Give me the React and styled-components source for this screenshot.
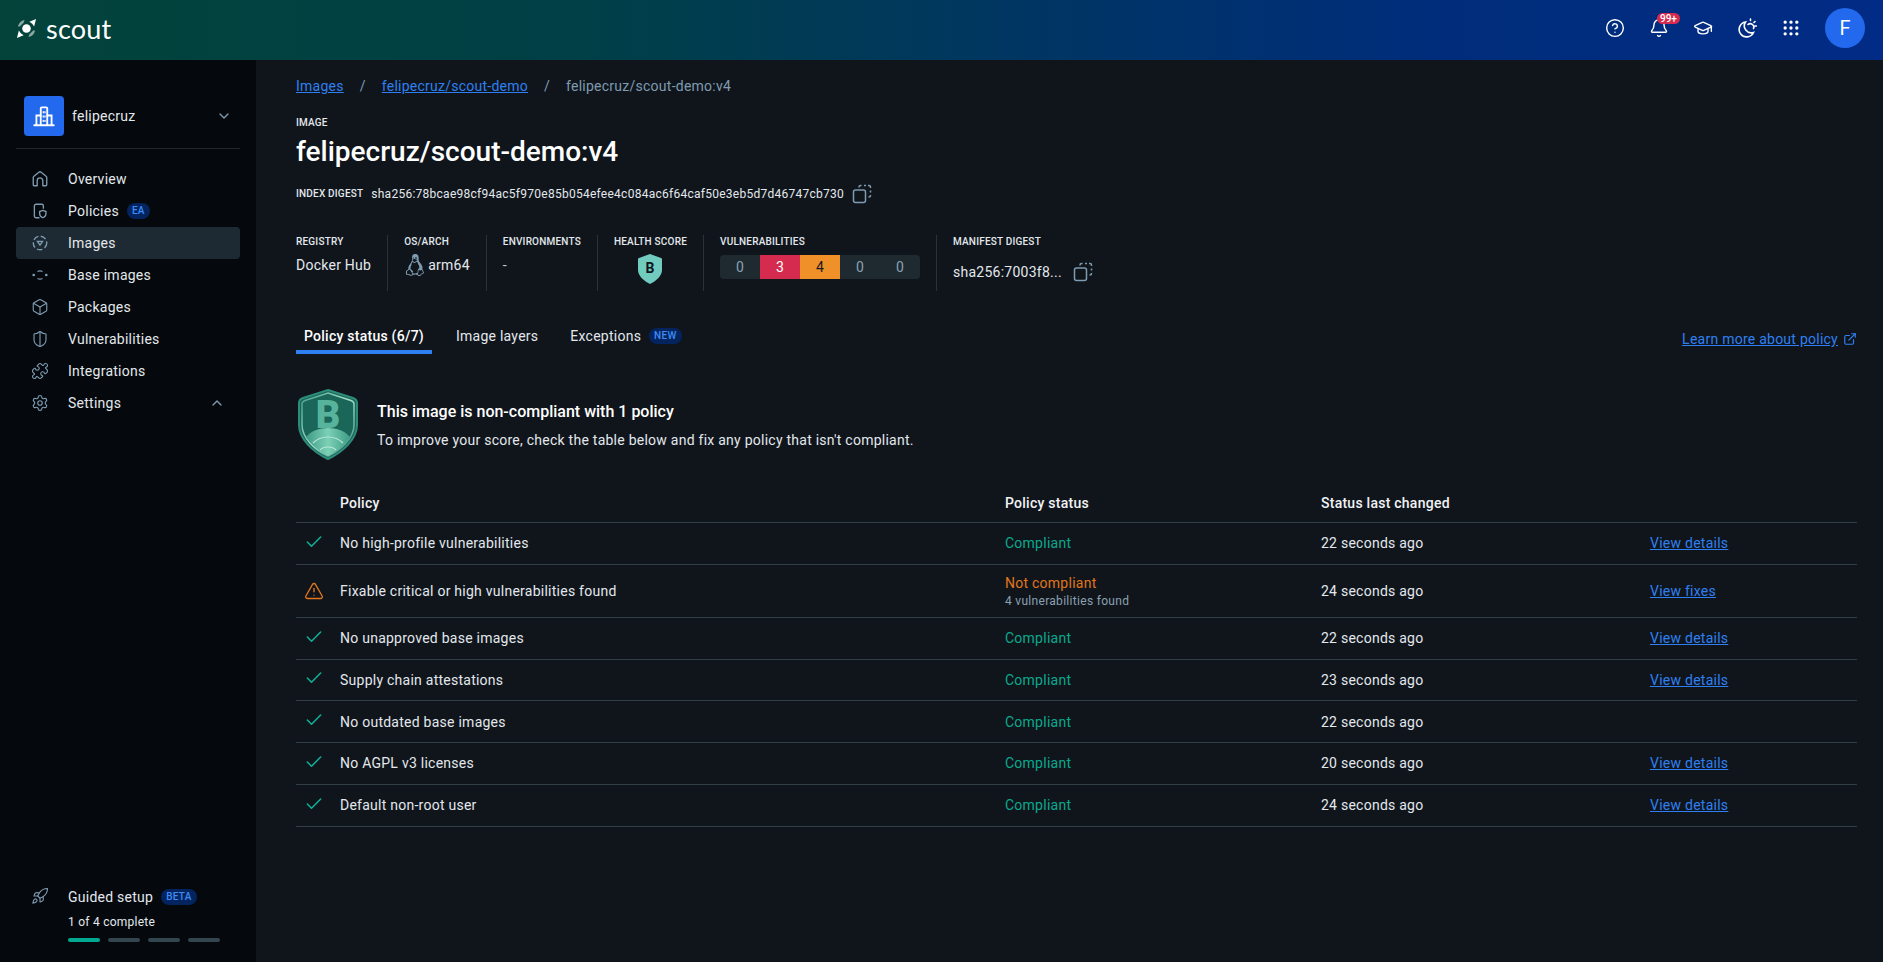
import React from "react";
import styled, { createGlobalStyle } from "styled-components";
import {
  Bell,
  Box,
  Check,
  ChevronDown,
  ChevronUp,
  CircleHelp,
  ExternalLink,
  GraduationCap,
  Grip,
  Puzzle,
  Rocket,
  Settings,
  ShieldHalf,
  TriangleAlert,
} from "lucide-react";
import { VscTerminalLinux } from "react-icons/vsc";

const GlobalStyle = createGlobalStyle`
  html, body {
    margin: 0;
    padding: 0;
    background: #10151c;
    font-family: Roboto, "Liberation Sans", sans-serif;
    color: #e3e8ec;
  }
  * { box-sizing: border-box; }
`;

const Page = styled.div`
  width: 100%;
  height: 962px;
  display: flex;
  flex-direction: column;
  overflow: hidden;
`;

const Header = styled.header`
  height: 60px;
  flex: none;
  display: flex;
  align-items: center;
  justify-content: space-between;
  padding: 0 18px 4px 16px;
  background: linear-gradient(90deg, #03433a 0%, #004046 30%, #002d7a 75%, #012b85 100%);
`;

const Logo = styled.div`
  display: flex;
  align-items: center;
  gap: 9px;
`;

const LogoText = styled.span`
  font-family: Lato, sans-serif;
  font-size: 27px;
  line-height: 1;
  color: #fff;
  letter-spacing: 0.2px;
`;

const HeaderTools = styled.div`
  display: flex;
  align-items: center;
  color: #fff;
`;

const ToolButton = styled.div`
  position: relative;
  width: 44px;
  height: 20px;
  display: flex;
  justify-content: center;
`;

const Badge = styled.span`
  position: absolute;
  top: -5px;
  left: 20px;
  height: 11px;
  padding: 0 3px;
  border-radius: 6px;
  background: #d52b4f;
  color: #fff;
  font-size: 10px;
  font-weight: 500;
  line-height: 11px;
`;

const Avatar = styled.div`
  width: 40px;
  height: 40px;
  margin-left: 12px;
  border-radius: 50%;
  background: #2269ee;
  color: #fff;
  display: grid;
  place-items: center;
  font-size: 20px;
`;

const Body = styled.div`
  flex: 1;
  display: flex;
  min-height: 0;
`;

const Sidebar = styled.aside`
  width: 256px;
  flex: none;
  background: #05090d;
  padding: 36px 16px 20px;
  display: flex;
  flex-direction: column;
  justify-content: space-between;
`;

const OrgRow = styled.div`
  display: flex;
  align-items: center;
  padding: 0 8px 12px;
  border-bottom: 1px solid #20272c;
  margin-bottom: 14px;
`;

const OrgIcon = styled.div`
  width: 40px;
  height: 40px;
  border-radius: 4px;
  background: #2269ee;
  color: #fff;
  display: grid;
  place-items: center;
  margin-right: 8px;
`;

const OrgName = styled.span`
  flex: 1;
  font-size: 14px;
  letter-spacing: 0.25px;
`;

const Nav = styled.nav`
  display: flex;
  flex-direction: column;
`;

const NavItem = styled.div`
  height: 32px;
  display: flex;
  align-items: center;
  padding: 0 15px 0 16px;
  border-radius: 4px;
  background: ${props => (props.$active ? "#1e2a33" : "transparent")};
  font-size: 14px;
  letter-spacing: 0.25px;
`;

const NavIcon = styled.span`
  width: 37px;
  margin-left: -1px;
  flex: none;
  display: flex;
  color: #7f9bb0;
`;

const NavChevron = styled.span`
  margin-left: auto;
  display: flex;
  color: #7f9bb0;
`;

const Pill = styled.span`
  margin-left: 8px;
  height: 16px;
  padding: 0 5px;
  border-radius: 8px;
  background: #04245f;
  color: #3d8cf5;
  font-size: 10px;
  font-weight: 500;
  line-height: 16px;
  letter-spacing: 0.3px;
`;

const TabPill = styled(Pill)`
  margin-top: 2px;
`;

const Guide = styled.div`
  padding: 0 16px;
  display: flex;
  align-items: flex-start;
`;

const GuideTitle = styled.div`
  display: flex;
  align-items: center;
  font-size: 14px;
  letter-spacing: 0.25px;
  height: 20px;
`;

const GuideCount = styled.div`
  margin-top: 8px;
  font-size: 12px;
  letter-spacing: 0.25px;
`;

const Steps = styled.div`
  display: flex;
  gap: 8px;
  margin-top: 9px;
`;

const Step = styled.span`
  width: 32px;
  height: 4px;
  border-radius: 2px;
  background: ${props => (props.$done ? "#00a98f" : "#33454f")};
`;

const Main = styled.main`
  flex: 1;
  padding: 16px 26px 0 40px;
  min-width: 0;
`;

const Crumbs = styled.div`
  display: flex;
  align-items: center;
  height: 20px;
  font-size: 14px;
  letter-spacing: 0.25px;
`;

const TextLink = styled.a`
  color: #2e80f2;
  text-decoration: underline;
  font-size: 14px;
  letter-spacing: 0.25px;
`;

const CrumbSep = styled.span`
  margin: 0 16px;
  color: #7f9bb0;
`;

const CrumbCurrent = styled.span`
  color: #7f9bb0;
`;

const SmallLabel = styled.div`
  font-size: 10px;
  font-weight: 500;
  line-height: 14px;
  text-transform: uppercase;
  letter-spacing: 0.2px;
  color: #e3e8ec;
  white-space: nowrap;
`;

const ImageLabel = styled(SmallLabel)`
  margin-top: 20px;
`;

const Title = styled.h1`
  margin: 4px 0 0;
  font-size: 28px;
  line-height: 36px;
  font-weight: 500;
  color: #fff;
`;

const DigestRow = styled.div`
  margin-top: 12px;
  height: 24px;
  display: flex;
  align-items: center;
  gap: 8px;
`;

const DigestText = styled.span`
  font-size: 12px;
  letter-spacing: 0.26px;
`;

const Meta = styled.div`
  margin-top: 29px;
  display: flex;
  height: 56px;
`;

const MetaCell = styled.div`
  padding: 0 16px;
  border-right: 1px solid #2a3238;
  &:first-child { padding-left: 0; }
  &:last-child { border-right: 0; }
`;

const MetaValue = styled.div`
  margin-top: ${props => props.$offset || "8px"};
  font-size: 14px;
  letter-spacing: 0.25px;
  display: flex;
  align-items: center;
  color: ${props => (props.$muted ? "#c4ced6" : "#e3e8ec")};
`;

const ArchValue = styled(MetaValue)`
  margin-top: 5px;
  gap: 2px;
`;

const CopySpacer = styled.span`
  width: 11px;
`;

const ShieldWrap = styled.div`
  margin-top: 5px;
  display: flex;
  justify-content: center;
`;

const VulnBar = styled.div`
  margin-top: 6px;
  display: flex;
  border-radius: 4px;
  overflow: hidden;
`;

const VulnCell = styled.span`
  width: 40px;
  height: 24px;
  display: grid;
  place-items: center;
  font-size: 14px;
  background: ${props => props.$bg || "#1e2a30"};
  color: ${props => props.$color || "#8ba0b0"};
`;

const TabBar = styled.div`
  margin-top: 31px;
  display: flex;
  align-items: flex-start;
  justify-content: space-between;
`;

const Tabs = styled.div`
  display: flex;
  gap: 16px;
`;

const Tab = styled.div`
  height: 32px;
  padding: 4px 8px 0;
  display: flex;
  align-items: flex-start;
  font-size: 14px;
  line-height: 20px;
  letter-spacing: 0.25px;
  font-weight: ${props => (props.$active ? 500 : 400)};
  color: ${props => (props.$active ? "#fff" : "#e3e8ec")};
  border-bottom: 4px solid ${props => (props.$active ? "#2e80f2" : "transparent")};
`;

const LearnLink = styled.div`
  display: flex;
  align-items: center;
  gap: 5px;
  color: #2e80f2;
  margin-top: 9px;
`;

const Summary = styled.div`
  margin-top: 35px;
  display: flex;
  align-items: center;
  padding-left: 2px;
  gap: 19px;
`;

const SummaryTitle = styled.div`
  font-size: 16px;
  font-weight: 500;
  color: #fff;
  line-height: 24px;
`;

const SummaryText = styled.div`
  margin-top: 6px;
  font-size: 14px;
  letter-spacing: 0.25px;
  line-height: 20px;
`;

const Table = styled.div`
  margin-top: 23px;
`;

const Row = styled.div`
  display: grid;
  grid-template-columns: 44px 665px 316px 329px 1fr;
  align-items: center;
  min-height: ${props => (props.$tall ? "53px" : "41.75px")};
  border-bottom: 1px solid #2f3f45;
  font-size: 14px;
  letter-spacing: 0.25px;
`;

const HeadRow = styled(Row)`
  min-height: 40px;
  font-weight: 500;
  color: #f0f3f5;
`;

const StatusIcon = styled.span`
  display: flex;
  padding-left: 8px;
  margin-bottom: ${props => (props.$warn ? "0" : "3px")};
  color: ${props => (props.$warn ? "#e1761a" : "#0fb39a")};
`;

const StatusCell = styled.div`
  padding-top: ${props => (props.$warn ? "3px" : "0")};
`;

const Status = styled.div`
  line-height: 18px;
  color: ${props => (props.$warn ? "#e1761a" : "#0aa98c")};
`;

const StatusNote = styled.div`
  font-size: 12px;
  line-height: 18px;
  letter-spacing: 0.3px;
  color: #8ba0b0;
`;

function HomeIcon() {
  return (
    <svg width="18" height="18" viewBox="0 0 16 16" fill="none" stroke="currentColor" strokeWidth="1.2" strokeLinejoin="round">
      <path d="M2 13V6.800c0-.5.2-.9.6-1.200L7 2c.6-.5 1.400-.5 2 0l4.400 3.600c.4.3.6.7.6 1.200V13c0 .6-.4 1-1 1h-2.500V9.500a2.500 2.500 0 0 0-5 0V14H3c-.6 0-1-.4-1-1z" />
    </svg>
  );
}

function ImagesIcon() {
  return (
    <svg width="18" height="18" viewBox="0 0 16 16" fill="none" stroke="currentColor" strokeWidth="1.200">
      <circle cx="8" cy="8" r="6" strokeDasharray="5 2.200" />
      <path d="M5.800 6.600h4.400L8 9.800z" />
    </svg>
  );
}

function BaseImagesIcon() {
  return (
    <svg width="18" height="18" viewBox="0 0 16 16" fill="none" stroke="currentColor" strokeWidth="1.200">
      <path d="M5.800 4.900a4.500 4.500 0 0 1 4.400 0M5.800 11.100a4.500 4.500 0 0 0 4.400 0" />
      <circle cx="2.400" cy="8" r=".6" />
      <circle cx="13.600" cy="8" r=".6" />
    </svg>
  );
}

function PolicyIcon() {
  return (
    <svg width="18" height="18" viewBox="0 0 16 16" fill="none" stroke="currentColor" strokeWidth="1.200">
      <path d="M7.500 14H4.500A1.500 1.500 0 0 1 3 12.500v-9A1.500 1.500 0 0 1 4.500 2h5A1.500 1.500 0 0 1 11 3.500V6" />
      <path d="M10.500 7.500l2.800 1v2c0 1.700-1.200 2.800-2.800 3.500-1.600-.7-2.800-1.800-2.800-3.500v-2z" />
    </svg>
  );
}

function OrgGlyph() {
  return (
    <svg width="26" height="26" viewBox="0 0 24 24" fill="none" stroke="currentColor" strokeWidth="1.700" strokeLinecap="round">
      <path d="M3 20.500h18M5 20v-8.500h4M19 20v-8.500h-4" />
      <path d="M9 20V5a1 1 0 0 1 1-1h4a1 1 0 0 1 1 1v15" />
      <path d="M11.300 8v1M12.900 8v1M11.300 12v1M12.900 12v1M11.300 16v1M12.900 16v1" strokeWidth="1.200" />
    </svg>
  );
}

function CopyIcon() {
  return (
    <svg width="20" height="20" viewBox="0 0 20 20" fill="none" stroke="#7f9bb0" strokeWidth="1.500">
      <rect x="1.500" y="6" width="12" height="12.500" rx="2" />
      <path d="M7 3.500V3a1.500 1.500 0 0 1 1.500-1.500h1M12 1.500h2M16 1.500h1A1.500 1.500 0 0 1 18.500 3v1M18.500 6.500v2M18.500 11v.5a1.500 1.500 0 0 1-1.500 1.500h-.5" />
    </svg>
  );
}

function ThemeIcon() {
  return (
    <svg width="20" height="20" viewBox="0 0 20 20" fill="none" stroke="currentColor" strokeWidth="1.600" strokeLinecap="round">
      <path d="M8.500 4a7.500 7.500 0 1 0 8 10.500A7 7 0 0 1 8.500 4z" />
      <path d="M11 6.500a3.500 3.500 0 0 1 5.500 4M13.500 1v1.500M19.300 8h-1.500M18 3.500l-1 1" />
    </svg>
  );
}

function ScoutMark() {
  return (
    <svg width="21" height="21" viewBox="0 0 22 22">
      <path d="M2 9a9 9 0 0 1 7-7l-1 3-4 4zM20 13a9 9 0 0 1-7 7l1-3 4-4z" fill="#8aa5a2" />
      <circle cx="11" cy="11" r="4.500" fill="#fff" />
      <path d="M21 1l-2 8-2-3-3-2zM1 21l2-8 2 3 3 2z" fill="#fff" />
    </svg>
  );
}

function SmallShield() {
  return (
    <svg width="24" height="30" viewBox="0 0 24 30">
      <path d="M12 0l11 4c1 .4 1 1 1 2v10c0 6-6 11-12 14C6 27 0 22 0 16V6c0-1 0-1.600 1-2z" fill="#72cbbf" />
      <text x="12" y="19" textAnchor="middle" fontSize="14" fontWeight="700" fill="#10151c" fontFamily="Roboto, sans-serif">B</text>
    </svg>
  );
}

function BigShield() {
  return (
    <svg width="60" height="71" viewBox="0 0 60 71">
      <defs>
        <linearGradient id="rim" x1="0" y1="0" x2="1" y2="1">
          <stop offset="0" stopColor="#3f9c87" />
          <stop offset=".5" stopColor="#a5e0cc" />
          <stop offset="1" stopColor="#2f8a78" />
        </linearGradient>
        <linearGradient id="wave" x1="0" y1="0" x2="1" y2="0">
          <stop offset="0" stopColor="#3f9c87" />
          <stop offset=".5" stopColor="#7cd0b5" />
          <stop offset="1" stopColor="#3f9c87" />
        </linearGradient>
      </defs>
      <path d="M30 1l25 8c3 1 4 2 4 5v22c0 14-14 27-29 34C15 63 1 50 1 36V14c0-3 1-4 4-5z" fill="#1a6658" stroke="#2d8c7a" strokeWidth="2" />
      <path d="M30 4l23 7.500c2 .7 3 1.500 3 3.500v21c0 13-13 25-26 31C17 61 4 49 4 36V15c0-2 1-2.800 3-3.500z" fill="none" stroke="url(#rim)" strokeWidth="1.500" />
      <path d="M8 48c5-6 13-9 22-9s17 3 22 9c-4 7-13 14-22 19C21 62 12 55 8 48z" fill="url(#wave)" />
      <path d="M15 54c4-4 9-6 15-6s11 2 15 6M22 61c2-2 5-3 8-3s6 1 8 3" fill="none" stroke="#b5e8d6" strokeWidth="1.200" />
      <text x="30" y="39" textAnchor="middle" fontSize="38" fontWeight="900" fill="#58b39c" fontFamily="Roboto, sans-serif">B</text>
    </svg>
  );
}

const navItems = [
  { label: "Overview", icon: <HomeIcon /> },
  { label: "Policies", icon: <PolicyIcon />, pill: "EA" },
  { label: "Images", icon: <ImagesIcon />, active: true },
  { label: "Base images", icon: <BaseImagesIcon /> },
  { label: "Packages", icon: <Box size={18} strokeWidth={1.5} /> },
  { label: "Vulnerabilities", icon: <ShieldHalf size={18} strokeWidth={1.5} /> },
  { label: "Integrations", icon: <Puzzle size={18} strokeWidth={1.5} /> },
  { label: "Settings", icon: <Settings size={18} strokeWidth={1.5} />, open: true },
];

const policies = [
  { name: "No high-profile vulnerabilities", changed: "22 seconds ago", link: "View details" },
  { name: "Fixable critical or high vulnerabilities found", changed: "24 seconds ago", link: "View fixes", warn: true },
  { name: "No unapproved base images", changed: "22 seconds ago", link: "View details" },
  { name: "Supply chain attestations", changed: "23 seconds ago", link: "View details" },
  { name: "No outdated base images", changed: "22 seconds ago" },
  { name: "No AGPL v3 licenses", changed: "20 seconds ago", link: "View details" },
  { name: "Default non-root user", changed: "24 seconds ago", link: "View details" },
];

export default function App() {
  return (
    <Page>
      <GlobalStyle />
      <Header>
        <Logo>
          <ScoutMark />
          <LogoText>scout</LogoText>
        </Logo>
        <HeaderTools>
          <ToolButton><CircleHelp size={20} strokeWidth={1.7} /></ToolButton>
          <ToolButton>
            <Bell size={20} strokeWidth={1.7} />
            <Badge>99+</Badge>
          </ToolButton>
          <ToolButton><GraduationCap size={20} strokeWidth={1.7} /></ToolButton>
          <ToolButton><ThemeIcon /></ToolButton>
          <ToolButton><Grip size={20} strokeWidth={2} /></ToolButton>
          <Avatar>F</Avatar>
        </HeaderTools>
      </Header>
      <Body>
        <Sidebar>
          <div>
            <OrgRow>
              <OrgIcon><OrgGlyph /></OrgIcon>
              <OrgName>felipecruz</OrgName>
              <NavChevron><ChevronDown size={16} /></NavChevron>
            </OrgRow>
            <Nav>
              {navItems.map(item => (
                <NavItem key={item.label} $active={item.active}>
                  <NavIcon>{item.icon}</NavIcon>
                  {item.label}
                  {item.pill && <Pill>{item.pill}</Pill>}
                  {item.open && <NavChevron><ChevronUp size={16} /></NavChevron>}
                </NavItem>
              ))}
            </Nav>
          </div>
          <Guide>
            <NavIcon><Rocket size={18} strokeWidth={1.5} /></NavIcon>
            <div>
              <GuideTitle>Guided setup<Pill>BETA</Pill></GuideTitle>
              <GuideCount>1 of 4 complete</GuideCount>
              <Steps>
                <Step $done />
                <Step />
                <Step />
                <Step />
              </Steps>
            </div>
          </Guide>
        </Sidebar>
        <Main>
          <Crumbs>
            <TextLink>Images</TextLink>
            <CrumbSep>/</CrumbSep>
            <TextLink>felipecruz/scout-demo</TextLink>
            <CrumbSep>/</CrumbSep>
            <CrumbCurrent>felipecruz/scout-demo:v4</CrumbCurrent>
          </Crumbs>
          <ImageLabel>Image</ImageLabel>
          <Title>felipecruz/scout-demo:v4</Title>
          <DigestRow>
            <SmallLabel>Index digest</SmallLabel>
            <DigestText>sha256:78bcae98cf94ac5f970e85b054efee4c084ac6f64caf50e3eb5d7d46747cb730</DigestText>
            <CopyIcon />
          </DigestRow>
          <Meta>
            <MetaCell>
              <SmallLabel>Registry</SmallLabel>
              <MetaValue>Docker Hub</MetaValue>
            </MetaCell>
            <MetaCell>
              <SmallLabel>OS/Arch</SmallLabel>
              <ArchValue><VscTerminalLinux size={22} color="#7f9bb0" />arm64</ArchValue>
            </MetaCell>
            <MetaCell>
              <SmallLabel>Environments</SmallLabel>
              <MetaValue $muted>-</MetaValue>
            </MetaCell>
            <MetaCell>
              <SmallLabel>Health score</SmallLabel>
              <ShieldWrap><SmallShield /></ShieldWrap>
            </MetaCell>
            <MetaCell>
              <SmallLabel>Vulnerabilities</SmallLabel>
              <VulnBar>
                <VulnCell>0</VulnCell>
                <VulnCell $bg="#d52b4f" $color="#fff">3</VulnCell>
                <VulnCell $bg="#f09029" $color="#1a1a1a">4</VulnCell>
                <VulnCell>0</VulnCell>
                <VulnCell>0</VulnCell>
              </VulnBar>
            </MetaCell>
            <MetaCell>
              <SmallLabel>Manifest digest</SmallLabel>
              <MetaValue $offset="13px">sha256:7003f8...<CopySpacer /><CopyIcon /></MetaValue>
            </MetaCell>
          </Meta>
          <TabBar>
            <Tabs>
              <Tab $active>Policy status (6/7)</Tab>
              <Tab>Image layers</Tab>
              <Tab>Exceptions<TabPill>NEW</TabPill></Tab>
            </Tabs>
            <LearnLink>
              <TextLink>Learn more about policy</TextLink>
              <ExternalLink size={14} />
            </LearnLink>
          </TabBar>
          <Summary>
            <BigShield />
            <div>
              <SummaryTitle>This image is non-compliant with 1 policy</SummaryTitle>
              <SummaryText>To improve your score, check the table below and fix any policy that isn't compliant.</SummaryText>
            </div>
          </Summary>
          <Table>
            <HeadRow>
              <span />
              <span>Policy</span>
              <span>Policy status</span>
              <span>Status last changed</span>
              <span />
            </HeadRow>
            {policies.map(policy => (
              <Row key={policy.name} $tall={policy.warn}>
                <StatusIcon $warn={policy.warn}>
                  {policy.warn ? <TriangleAlert size={20} strokeWidth={1.6} /> : <Check size={20} strokeWidth={1.8} />}
                </StatusIcon>
                <span>{policy.name}</span>
                <StatusCell $warn={policy.warn}>
                  <Status $warn={policy.warn}>{policy.warn ? "Not compliant" : "Compliant"}</Status>
                  {policy.warn && <StatusNote>4 vulnerabilities found</StatusNote>}
                </StatusCell>
                <span>{policy.changed}</span>
                <span>{policy.link && <TextLink>{policy.link}</TextLink>}</span>
              </Row>
            ))}
          </Table>
        </Main>
      </Body>
    </Page>
  );
}
